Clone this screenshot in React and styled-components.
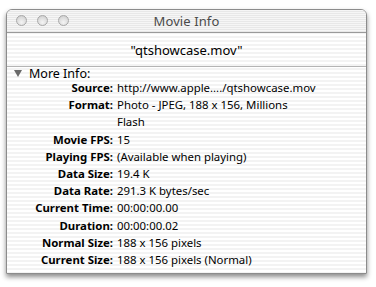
import React from 'react';
import styled, { createGlobalStyle } from 'styled-components';

const Global = createGlobalStyle`
    html, body {
        margin: 0;
        background: #fff;
    }
    body {
        font-family: "Noto Sans", "DejaVu Sans", sans-serif;
        color: #000;
    }
`;

const stripes = `repeating-linear-gradient(to bottom, #ffffff 0px, #ffffff 2px, #f3f3f3 2px, #f3f3f3 4px)`;

const Page = styled.div`
    width: 376px;
    height: 287px;
    padding: 9px 0 0 6px;
    box-sizing: border-box;
`;

const Window = styled.div`
    width: 361px;
    height: 265px;
    box-sizing: border-box;
    border: 1px solid #8c8c8c;
    border-radius: 6px 6px 0 0;
    box-shadow: 0 3px 5px rgba(0, 0, 0, 0.45);
    display: flex;
    flex-direction: column;
    overflow: hidden;
    background: ${stripes};
`;

const TitleBar = styled.div`
    height: 22px;
    flex: none;
    position: relative;
    display: flex;
    align-items: center;
    justify-content: center;
    border-bottom: 1px solid #9a9a9a;
    background: repeating-linear-gradient(to bottom, #f6f6f6 0px, #f6f6f6 1px, #e8e8e8 1px, #e8e8e8 2px);
`;

const Lights = styled.div`
    position: absolute;
    left: 9px;
    top: 5px;
    display: flex;
    gap: 10px;
`;

const Light = styled.span`
    width: 11px;
    height: 11px;
    border-radius: 50%;
    box-sizing: border-box;
    border: 1px solid #a8a8a8;
    background: radial-gradient(circle at 50% 70%, #f4f4f4 0%, #dcdcdc 60%, #c4c4c4 100%);
`;

const Title = styled.div`
    font-size: 13px;
    color: #4a4a4a;
    letter-spacing: 0.1px;
`;

const FileRow = styled.div`
    height: 33px;
    flex: none;
    display: flex;
    align-items: center;
    justify-content: center;
    border-bottom: 1px solid #b4b4b4;
    font-size: 13px;
`;

const Section = styled.div`
    padding: 0 0 0 7px;
`;

const Disclosure = styled.div`
    display: flex;
    align-items: center;
    gap: 7px;
    height: 12px;
    font-size: 12.5px;
`;

const Triangle = styled.span`
    width: 0;
    height: 0;
    border-left: 4px solid transparent;
    border-right: 4px solid transparent;
    border-top: 7px solid #6a6a6a;
`;

const InfoGrid = styled.div`
    display: grid;
    grid-template-columns: 99px 1fr;
    column-gap: 4px;
    grid-auto-rows: 17.2px;
    align-items: center;
    font-size: 11.4px;
`;

const Label = styled.div`
    font-weight: bold;
    text-align: right;
    white-space: nowrap;
`;

const Value = styled.div`
    white-space: nowrap;
`;

const rows = [
    ['Source:', 'http://www.apple..../qtshowcase.mov'],
    ['Format:', 'Photo - JPEG, 188 x 156, Millions'],
    ['', 'Flash'],
    ['Movie FPS:', '15'],
    ['Playing FPS:', '(Available when playing)'],
    ['Data Size:', '19.4 K'],
    ['Data Rate:', '291.3 K bytes/sec'],
    ['Current Time:', '00:00:00.00'],
    ['Duration:', '00:00:00.02'],
    ['Normal Size:', '188 x 156 pixels'],
    ['Current Size:', '188 x 156 pixels (Normal)'],
];

export default function App() {
    return (
        <Page>
            <Global />
            <Window>
                <TitleBar>
                    <Lights>
                        <Light />
                        <Light />
                        <Light />
                    </Lights>
                    <Title>Movie Info</Title>
                </TitleBar>
                <FileRow>"qtshowcase.mov"</FileRow>
                <Section>
                    <Disclosure>
                        <Triangle />
                        <span>More Info:</span>
                    </Disclosure>
                    <InfoGrid>
                        {rows.map(([label, value], i) => (
                            <React.Fragment key={i}>
                                <Label>{label}</Label>
                                <Value>{value}</Value>
                            </React.Fragment>
                        ))}
                    </InfoGrid>
                </Section>
            </Window>
        </Page>
    );
}
